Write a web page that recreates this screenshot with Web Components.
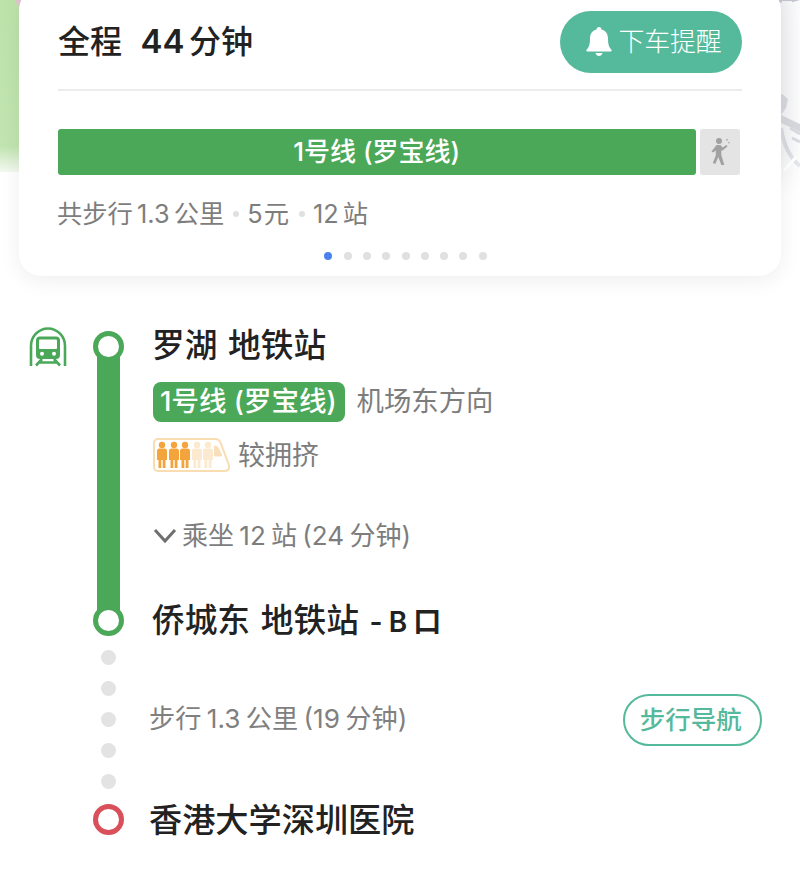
<!DOCTYPE html>
<html lang="zh-CN"><head><meta charset="utf-8"><style>
html,body{margin:0;padding:0;background:#fff;}
body{width:800px;height:896px;overflow:hidden;font-family:Inter,"Noto Sans CJK SC",sans-serif;color:#222;}
</style></head><body>
<route-page>
  <route-card slot="card"></route-card>
  <route-timeline slot="timeline"></route-timeline>
</route-page>
<script>
function def(name,html){customElements.define(name,class extends HTMLElement{constructor(){super();this.attachShadow({mode:'open'}).innerHTML=html;}});}
const FONT='Inter,"Noto Sans CJK SC",sans-serif';
def('route-map',`<style>:host{display:block;position:absolute;left:0;top:0;width:800px;height:200px;overflow:hidden}
svg{display:block}</style>
<svg width="800" height="200" viewBox="0 0 800 200">
<defs><linearGradient id="g" x1="0" y1="0" x2="0" y2="1"><stop offset="0" stop-color="#bde3ab"/><stop offset=".85" stop-color="#c1e5b0"/><stop offset="1" stop-color="#f4f9f1"/></linearGradient>
<linearGradient id="w" x1="0" y1="0" x2="1" y2="0"><stop offset="0" stop-color="#ecedef"/><stop offset="1" stop-color="#fbfbfc"/></linearGradient>
<linearGradient id="f" x1="0" y1="0" x2="0" y2="1"><stop offset="0" stop-color="#fff" stop-opacity="0"/><stop offset="1" stop-color="#fff"/></linearGradient></defs>
<rect x="0" y="0" width="24" height="172" fill="url(#g)"/>
<rect x="776" y="0" width="24" height="196" fill="url(#w)"/>
<path d="M15 0l4 7 4-7z" fill="#e5c3cf"/>
<path d="M776 95l6-1 6 5-2 9-5 7 19 9v8l-25-12z" fill="#d5d7dd"/>
<path d="M781 128q4 26 19 38" stroke="#d8dae0" stroke-width="4" fill="none"/>
<path d="M790 128l10 6M792 138l8 4" stroke="#d8dae0" stroke-width="3" fill="none"/>
<path d="M784 171l12-14" stroke="#fff" stroke-width="3" fill="none"/>
<path d="M770 0q14 6 30 0z" fill="#c3c6cf"/>
<path d="M782 2h10" stroke="#fff" stroke-width="1.500"/>
<rect x="776" y="150" width="24" height="46" fill="url(#f)"/>
</svg>`);
def('route-page',`<style>:host{display:block;position:relative;width:800px;height:896px;overflow:hidden}
.stack{position:relative;display:flex;flex-direction:column}</style>
<route-map></route-map><div class="stack"><slot name="card"></slot><slot name="timeline"></slot></div>`);
def('remind-btn',`<style>:host{display:inline-flex;align-items:center;justify-content:center;gap:7px;width:182px;height:62px;padding-left:5px;border-radius:31px;background:#55b99c;color:#fff;font:300 26px ${FONT};box-sizing:border-box}
svg{display:block}span{padding-bottom:6px;letter-spacing:-.3px}</style>
<svg width="26" height="30" viewBox="0 0 26 30"><path d="M13 0c1.500 0 2.400 1 2.500 2.400C20 3.600 22 7 22 11.500c0 5 .6 8.400 3.400 11.200.6.700.2 1.800-.8 1.800H1.400c-1 0-1.400-1.100-.8-1.800C3.400 19.900 4 16.500 4 11.500 4 7 6 3.600 10.500 2.400 10.600 1 11.500 0 13 0z" fill="#fff"/><path d="M9.500 26h7c-.5 2-1.800 3-3.500 3s-3-1-3.500-3z" fill="#fff"/></svg><span>下车提醒</span>`);
def('walk-icon',`<style>:host{display:block;width:20px;height:30px}svg{display:block}</style>
<svg width="20" height="30" viewBox="0 0 20 30" fill="#a0a1a3"><circle cx="9" cy="4" r="3"/><path d="M6.500 8h4l2 2.500 4-2.500 1 1.500-5 4-1.200 0 0 4.500 3 10h-3l-3-8-3 7-2.500-1 3-7.500v-5L3 15.500 1.500 14.500z"/><path d="M16 2.500l1.500-.7.300 1.500-1.300.5zM18 5.500l1.300-.7.300 1.300-1.200.5z"/></svg>`);
def('pager-dots',`<style>:host{display:flex;gap:11.300px;justify-content:center;padding-left:11px}
i{display:block;width:8px;height:8px;border-radius:50%;background:#e0e0e0}i:first-of-type{background:#4b83ee}</style>
<i></i><i></i><i></i><i></i><i></i><i></i><i></i><i></i><i></i>`);
def('route-card',`<style>:host{display:block;box-sizing:border-box;width:762px;height:288px;margin:-12px 19px 0;padding:23px 39px 0;background:#fff;border-radius:22px;box-shadow:0 4px 22px rgba(0,0,0,.07);font-family:${FONT}}
.head{display:flex;justify-content:space-between;align-items:center;height:62px;border-bottom:2px solid #ececec;padding-bottom:16px}
.title{font-size:32px;font-weight:500;color:#222;word-spacing:-4px;padding-bottom:6px}
.title b{font-weight:600;font-size:33px;margin-left:14px}
.bars{display:flex;gap:4.500px;margin-top:38px;height:46px}
.line{width:637.500px;background:#4ba859;border-radius:3px;color:#fff;font-size:26px;font-weight:500;display:flex;align-items:center;justify-content:center}
.line span{padding-bottom:5px}
.walk{width:40px;background:#e4e4e4;border-radius:3px;display:flex;align-items:center;justify-content:center}
.sub{margin-top:21px;margin-left:-1px;font-size:25.300px;line-height:36px;color:#7d7d7d;display:flex;align-items:center;white-space:pre;word-spacing:-3px}
.sub i{display:block;width:6px;height:6px;border-radius:50%;background:#e0e0e0;margin:0 8px 0 9px}
.sub .yuan{letter-spacing:1px}
pager-dots{margin-top:20px}</style>
<div class="head"><span class="title">全程 <b>44</b> 分钟</span><remind-btn></remind-btn></div>
<div class="bars"><div class="line"><span>1号线 (罗宝线)</span></div><div class="walk"><walk-icon></walk-icon></div></div>
<div class="sub"><span>共步行 1.3 公里</span><i></i><span class="yuan">5元</span><i></i><span>12 站</span></div>
<pager-dots></pager-dots>`);
def('metro-icon',`<style>:host{display:block;width:38px;height:40px}svg{display:block}</style>
<svg width="38" height="40" viewBox="0 0 38 40" fill="none" stroke="#4ba859"><path d="M2 39V19C2 9.500 9.500 1.500 19 1.500S36 9.500 36 19V39" stroke-width="2.600"/><path d="M11 9.500h16a4 4 0 0 1 4 4V28a4 4 0 0 1-4 4H11a4 4 0 0 1-4-4V13.500a4 4 0 0 1 4-4z" fill="#4ba859" stroke="none"/><rect x="10" y="12.500" width="18" height="9.500" rx="1" fill="#fff" stroke="none"/><circle cx="13" cy="26.800" r="2" fill="#fff" stroke="none"/><circle cx="25" cy="26.800" r="2" fill="#fff" stroke="none"/><path d="M13 32l-6 6.500M25 32l6 6.500M10.500 35.500h17" stroke-width="2.600"/></svg>`);
def('crowd-icon',`<style>:host{display:block;width:77px;height:34px}svg{display:block}</style>
<svg width="77" height="34" viewBox="0 0 77 34"><path d="M5 1H62c3.500 0 4.500 1 5.500 3.500L75.500 26c1.500 4 0 7-3.500 7H5a4 4 0 0 1-4-4V5a4 4 0 0 1 4-4z" fill="#fff" stroke="#f9dcb0" stroke-width="2"/>
${[9,21,32,44,55].map((x,i)=>`<g fill="${i<3?'#f3a43c':'#fbe9d0'}"><circle cx="${x}" cy="7" r="3.200"/><path d="M${x-5} 13a2.500 2.500 0 0 1 2.500-2.500h5a2.500 2.500 0 0 1 2.500 2.500v9h-1.500v8h-2.800v-8h-1.400v8h-2.800v-8h-1.500z"/></g>`).join('')}
<path d="M61 7.500c3 0 4 1 5 3l3 6c.4 1-.2 2-1.500 2H62.500a1.500 1.500 0 0 1-1.500-1.500z" fill="#f9dfb9"/></svg>`);
def('line-badge',`<style>:host{display:inline-block;background:#4ba859;color:#fff;border-radius:8px;padding:0 8px 0 7px;height:40px;font:500 27.500px/38px ${FONT}}</style><slot></slot>`);
def('nav-btn',`<style>:host{display:inline-flex;align-items:center;justify-content:center;box-sizing:border-box;width:139.500px;height:52px;border:2px solid #55b99c;border-radius:26px;color:#55b99c;font:500 25.500px ${FONT};padding-right:3px}
span{padding-bottom:5px}</style><span><slot></slot></span>`);
def('route-timeline',`<style>:host{display:grid;grid-template-columns:153px 1fr;font-family:${FONT}}
.rail{position:relative}
.ring{position:absolute;left:93px;box-sizing:border-box;width:31px;height:31px;border-radius:50%;background:#fff;border:5px solid #4ba859}
.ring.red{border-color:#d9505a}
.bar{position:absolute;left:97px;width:23px;background:#4ba859}
.dot{position:absolute;left:101px;width:15px;height:15px;border-radius:50%;background:#e3e3e3}
metro-icon{position:absolute;left:29px;top:51px}
.col{display:flex;flex-direction:column;padding-top:47px;padding-right:38px}
.stop{font-size:32.700px;font-weight:500;color:#222;line-height:44px;word-spacing:2px;margin-left:-1px;height:44px}
.row{display:flex;align-items:center;gap:12px;font-size:27.400px;color:#7d7d7d;margin-top:15px;height:40px}
.row span{padding-bottom:6px}
.crowd{margin-top:13px;gap:8px}
.crowd span{padding-bottom:4px;font-size:27px}
.ride{display:flex;align-items:center;gap:5px;margin-top:41px;height:40px;font-size:26px;color:#7d7d7d;word-spacing:-2px}
.ride span{padding-bottom:6px}
.stop.b{margin-top:42px}
.tail{word-spacing:-1px;font-size:28px;font-weight:600;line-height:1}
.walkrow{display:flex;justify-content:space-between;align-items:center;margin-left:-4px;margin-top:52px;height:52px;font-size:26.200px;color:#808080;word-spacing:-2px}
.walkrow>span{padding-bottom:6px}
.stop.end{margin-left:-4px;margin-top:52px;font-size:33.200px}
</style>
<div class="rail"><metro-icon></metro-icon>
<div class="bar" style="top:66px;height:270px"></div>
<div class="ring" style="top:55px"></div><div class="ring" style="top:329px"></div>
<div class="dot" style="top:374px"></div><div class="dot" style="top:405px"></div><div class="dot" style="top:436px"></div><div class="dot" style="top:467px"></div><div class="dot" style="top:498px"></div>
<div class="ring red" style="top:528px"></div></div>
<div class="col">
<div class="stop">罗湖 地铁站</div>
<div class="row"><line-badge>1号线 (罗宝线)</line-badge><span>机场东方向</span></div>
<div class="row crowd"><crowd-icon></crowd-icon><span>较拥挤</span></div>
<div class="ride"><svg width="24" height="16" viewBox="0 0 24 16" fill="none" stroke="#6f6f6f" stroke-width="3"><path d="M2 2l10 11L22 2"/></svg><span>乘坐 12 站 (24 分钟)</span></div>
<div class="stop b">侨城东 地铁站 <span class="tail">- B 口</span></div>
<div class="walkrow"><span>步行 1.3 公里 (19 分钟)</span><nav-btn>步行导航</nav-btn></div>
<div class="stop end">香港大学深圳医院</div>
</div>`);
</script></body></html>
